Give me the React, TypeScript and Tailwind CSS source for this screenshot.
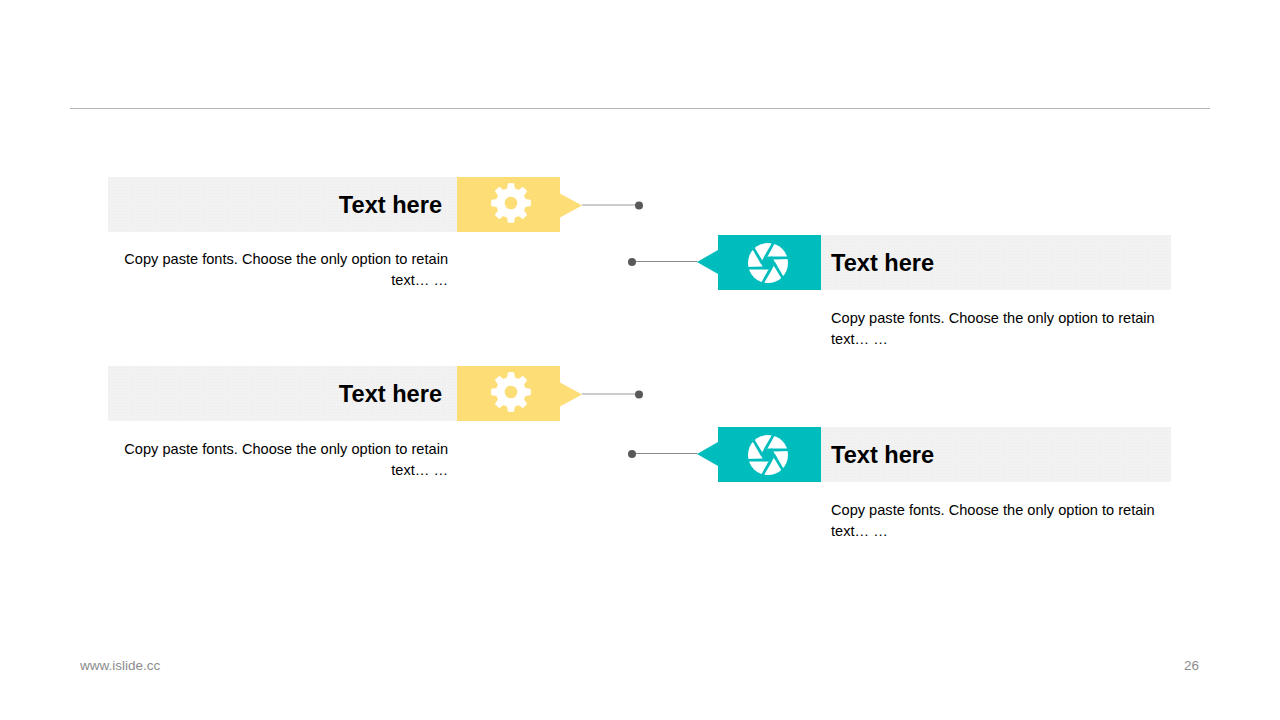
const BODY = "Copy paste fonts. Choose the only option to retain text… …";

// 8 tooth gear, drawn around 0,0
function gearPath(outer: number, root: number, teeth: number) {
  const pts: string[] = [];
  const step = (Math.PI * 2) / teeth;
  for (let i = 0; i < teeth; i++) {
    const a = i * step - Math.PI / 2;
    const list: [number, number][] = [
      [root, a - step * 0.3],
      [outer, a - step * 0.17],
      [outer, a + step * 0.17],
      [root, a + step * 0.3],
    ];
    list.forEach(([r, t]) => pts.push(`${(r * Math.cos(t)).toFixed(2)} ${(r * Math.sin(t)).toFixed(2)}`));
  }
  return `M${pts.join("L")}Z`;
}

const GearIcon = () => (
  <svg width="42" height="42" viewBox="-21 -21 42 42">
    <path d={gearPath(19.4, 14.5, 8)} fill="#fff" stroke="#fff" strokeWidth="1.2" strokeLinejoin="round" />
    <circle r="6.3" fill="#fcdd76" />
  </svg>
);

const blades = [0, 60, 120, 180, 240, 300];

const ApertureIcon = () => (
  <svg width="42" height="42" viewBox="-21 -21 42 42">
    <circle r="20" fill="#fff" />
    <polygon points="-3.7,-6.4 3.7,-6.4 7.4,0 3.7,6.4 -3.7,6.4 -7.4,0" fill="#00bdbd" />
    {blades.map((deg) => (
      <polygon key={deg} transform={`rotate(${deg})`} points="3,-6.6 21,-6.6 21,-4 5,-3.6" fill="#00bdbd" />
    ))}
  </svg>
);

const Connector = ({ flip }: { flip?: boolean }) => (
  <div className={flip ? "flex items-center" : "flex flex-row-reverse items-center"}>
    <span className="w-2 h-2 rounded-full bg-[#595959]" />
    <span className={flip ? "w-[61px] h-px bg-[#8a8a8a]" : "w-[53px] h-px bg-[#999999]"} />
  </div>
);

const Arrow = ({ flip }: { flip?: boolean }) =>
  flip ? (
    <svg width="21" height="24" viewBox="0 0 21 24" className="block">
      <polygon points="0,12 21,0 21,24" fill="#00bdbd" />
    </svg>
  ) : (
    <svg width="22" height="24" viewBox="0 0 22 24" className="block">
      <polygon points="22,12 0,0 0,24" fill="#fcdd76" />
    </svg>
  );

const Banner = ({ low }: { low?: boolean }) => (
  <div className="flex flex-col w-[536px]">
    <div className="flex items-center h-[55px]">
      <div className="w-[349px] h-full flex items-center justify-end pr-[15px] pt-[3px] bg-[#f2f2f2] bg-[radial-gradient(#ebebeb_0.7px,transparent_0.7px)] bg-size-[3px_3px]">
        <h2 className="text-[23.6px] font-bold text-black">Text here</h2>
      </div>
      <div className="w-[103px] h-full flex items-center justify-center pl-[5px] pb-[3px] bg-[#fcdd76]">
        <GearIcon />
      </div>
      <div className="flex items-center translate-y-[0.5px]">
        <Arrow />
        <Connector />
      </div>
    </div>
    <p className={low ? "w-[340px] mt-[18px] text-[14.6px] leading-[21px] text-right text-black" : "w-[340px] mt-[17px] text-[14.6px] leading-[21px] text-right text-black"}>{BODY}</p>
  </div>
);

const BannerFlip = () => (
  <div className="flex flex-col w-[543px]">
    <div className="flex items-center h-[55px]">
      <div className="flex items-center -translate-y-[1px]">
        <Connector flip />
        <Arrow flip />
      </div>
      <div className="w-[103px] h-full flex items-center justify-center pr-[3px] bg-[#00bdbd]">
        <ApertureIcon />
      </div>
      <div className="w-[350px] h-full flex items-center pl-[10px] pt-[3px] bg-[#f2f2f2] bg-[radial-gradient(#ebebeb_0.7px,transparent_0.7px)] bg-size-[3px_3px]">
        <h2 className="text-[23.6px] font-bold text-black">Text here</h2>
      </div>
    </div>
    <p className="ml-[203px] w-[340px] mt-[18px] text-[14.6px] leading-[21px] text-black">{BODY}</p>
  </div>
);

export default function App() {
  return (
    <div className="w-[1280px] h-[720px] bg-white flex flex-col overflow-hidden font-['Liberation_Sans',Arial,sans-serif]">
      <div className="mx-[70px] mt-[108px] h-px bg-[#b3b3b3]" />
      <main className="flex-1 flex pl-[108px]">
        <div className="flex flex-col gap-[75px] pt-[68px]">
          <Banner />
          <Banner low />
        </div>
        <div className="flex flex-col gap-[77px] pt-[126px] -ml-[16px]">
          <BannerFlip />
          <BannerFlip />
        </div>
      </main>
      <footer className="flex justify-between pl-[80px] pr-[81px] pb-[47px] text-[13.5px] leading-[14px] text-[#8c8c8c]">
        <span>www.islide.cc</span>
        <span>26</span>
      </footer>
    </div>
  );
}
